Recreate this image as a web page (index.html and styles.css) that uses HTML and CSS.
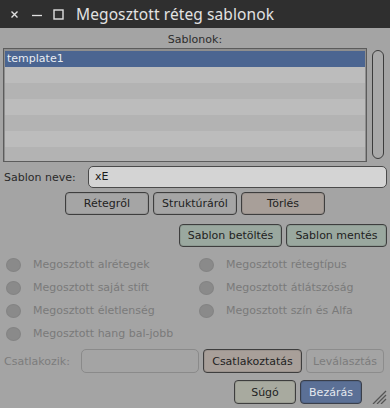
FILE: index.html
```html
<!DOCTYPE html>
<html>
<head>
<meta charset="utf-8">
<link rel="stylesheet" href="styles.css">
</head>
<body>
<div class="window">
  <div class="titlebar">
    <span class="tb-icon tb-close">
      <svg width="9" height="9" viewBox="0 0 9 9"><path d="M1.5 1.5 L7.5 7.5 M7.5 1.5 L1.5 7.5" stroke="#e0e0e0" stroke-width="1.4"/></svg>
    </span>
    <span class="tb-icon tb-min">
      <svg width="12" height="9" viewBox="0 0 12 9"><path d="M1 5.5 H11" stroke="#e0e0e0" stroke-width="1.3"/></svg>
    </span>
    <span class="tb-icon tb-max">
      <svg width="11" height="11" viewBox="0 0 11 11"><rect x="1" y="1" width="9" height="9" fill="none" stroke="#e0e0e0" stroke-width="1.4"/></svg>
    </span>
    <span class="title">Megosztott réteg sablonok</span>
  </div>

  <div class="content">
    <div class="section-label">Sablonok:</div>
    <div class="list-row">
      <div class="listbox">
        <div class="item selected">template1</div>
        <div class="item"></div>
        <div class="item alt"></div>
        <div class="item"></div>
        <div class="item alt"></div>
        <div class="item"></div>
        <div class="item alt"></div>
      </div>
      <div class="scrollbar"></div>
    </div>

    <div class="name-row">
      <span class="label">Sablon neve:</span>
      <div class="input">xE</div>
    </div>

    <div class="btn-row center">
      <button class="btn w83">Rétegről</button>
      <button class="btn w83">Struktúráról</button>
      <button class="btn w83 brown">Törlés</button>
    </div>

    <div class="btn-row right">
      <button class="btn green wide1">Sablon betöltés</button>
      <button class="btn green wide2">Sablon mentés</button>
    </div>

    <div class="checks">
      <div class="check"><span class="dot"></span>Megosztott alrétegek</div>
      <div class="check"><span class="dot"></span>Megosztott rétegtípus</div>
      <div class="check"><span class="dot"></span>Megosztott saját stift</div>
      <div class="check"><span class="dot"></span>Megosztott átlátszóság</div>
      <div class="check"><span class="dot"></span>Megosztott életlenség</div>
      <div class="check"><span class="dot"></span>Megosztott szín és Alfa</div>
      <div class="check"><span class="dot"></span>Megosztott hang bal-jobb</div>
    </div>

    <div class="connect-row">
      <span class="label disabled">Csatlakozik:</span>
      <div class="input off"></div>
      <button class="btn brown connect">Csatlakoztatás</button>
      <button class="btn off detach">Leválasztás</button>
    </div>

    <div class="bottom-row">
      <button class="btn help">Súgó</button>
      <button class="btn close">Bezárás</button>
      <span class="grip">
        <svg width="16" height="14" viewBox="0 0 16 14"><path d="M15 1 L2 14 M15 5 L6 14 M15 9 L10 14" stroke="#555" stroke-width="1.3"/></svg>
      </span>
    </div>
  </div>
</div>
</body>
</html>
```

FILE: styles.css
```css
* { box-sizing: border-box; }
html, body { margin: 0; padding: 0; }
body {
  width: 390px;
  height: 408px;
  background: #a4a4a4;
  font-family: "DejaVu Sans", sans-serif;
  font-size: 11px;
  color: #262626;
  overflow: hidden;
}
.window { width: 390px; height: 408px; display: flex; flex-direction: column; }

.titlebar {
  height: 28px;
  background: #2f2f2f;
  display: flex;
  align-items: center;
  color: #dedede;
  flex: none;
}
.tb-icon { display: flex; align-items: center; justify-content: center; }
.tb-close { margin-left: 10px; width: 9px; }
.tb-min { margin-left: 12px; width: 12px; }
.tb-max { margin-left: 10px; width: 11px; }
.title {
  margin-left: 12px;
  font-family: "Noto Sans", sans-serif;
  font-size: 15.5px;
  color: #e2e2e2;
  letter-spacing: 0.1px;
}

.content { padding: 0 3px 0 3px; flex: 1; }

.section-label {
  text-align: center;
  height: 20px;
  line-height: 20px;
  padding-top: 2px;
  color: #2c2c2c;
}

.list-row { display: flex; align-items: flex-start; }
.listbox {
  width: 364px;
  height: 114px;
  border: 1px solid #5c5c5c;
  background: #8e8e8e;
  padding: 2px 1px 0 1px;
  overflow: hidden;
}
.item {
  height: 16px;
  line-height: 16px;
  background: #bcbcbc;
  padding-left: 2px;
}
.item.alt { background: #b3b3b3; }
.item.selected { background: #4b6591; color: #e8ecf2; }
.scrollbar {
  margin-left: 5px;
  margin-top: 2px;
  width: 12px;
  height: 109px;
  border: 1px solid #3c3c3c;
  border-radius: 6px;
  background: #a9a9a9;
}

.name-row {
  display: flex;
  align-items: center;
  margin-top: 4px;
  height: 22px;
}
.label { width: 85px; padding-left: 1px; color: #2a2a2a; }
.label.disabled { color: #7c7c7c; width: 74px; }
.input {
  flex: 1;
  height: 22px;
  line-height: 20px;
  background: #d4d4d4;
  border: 1px solid #4a4a4a;
  border-radius: 5px;
  padding-left: 6px;
  color: #1a1a1a;
}
.input.off {
  flex: none;
  width: 118px;
  height: 24px;
  background: #a4a4a4;
  border-color: #8a8a8a;
}

.btn {
  font-family: "DejaVu Sans", sans-serif;
  font-size: 11px;
  color: #222;
  background: #a5a5a5;
  border: 1px solid #3e3e3e;
  border-radius: 4px;
  height: 23px;
  padding: 0;
  margin: 0;
  box-shadow: inset 0 0 0 1px rgba(0,0,0,0.08);
}
.btn-row { display: flex; gap: 4px; }
.btn-row.center { justify-content: center; margin-top: 4px; }
.btn-row.right { justify-content: flex-end; margin-top: 9px; }
.w83 { width: 84px; }
.brown { background: #a89f99; }
.green { background: #9aa89f; }
.wide1 { width: 103px; }
.wide2 { width: 101px; }

.checks {
  display: grid;
  grid-template-columns: 193px 1fr;
  grid-auto-rows: 23px;
  margin-top: 6px;
  padding-left: 3px;
}
.check {
  display: flex;
  align-items: center;
  color: #7a7a7a;
}
.dot {
  width: 15px;
  height: 14px;
  border-radius: 50%;
  background: #8a8a8a;
  border: 1px solid #848484;
  margin-right: 12px;
  flex: none;
}

.connect-row {
  display: flex;
  align-items: center;
  margin-top: 4px;
  height: 24px;
  gap: 4px;
}
.connect { width: 99px; height: 24px; }
.detach {
  width: 78px;
  height: 24px;
  background: #a4a4a4;
  border-color: #8c8c8c;
  color: #7c7c7c;
  box-shadow: none;
}

.bottom-row {
  display: flex;
  align-items: flex-start;
  justify-content: flex-end;
  margin-top: 7px;
  gap: 4px;
  height: 26px;
}
.help { width: 62px; height: 24px; background: #a8aa9f; }
.close { width: 62px; height: 24px; background: #5b7096; color: #e4e8ef; border-color: #3a3f4a; }
.grip { margin-left: 5px; margin-top: 10px; width: 16px; height: 14px; display: block; }
```
